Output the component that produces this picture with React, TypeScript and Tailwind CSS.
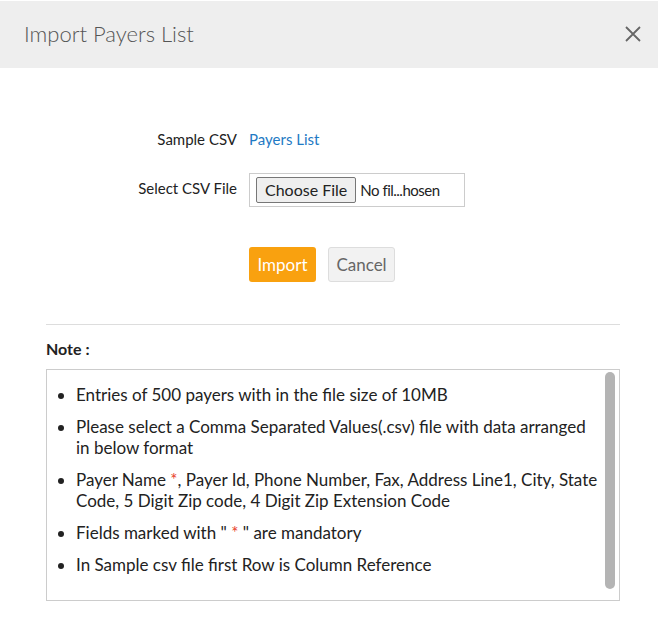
export default function App() {
  const items: React.ReactNode[] = [
    "Entries of 500 payers with in the file size of 10MB",
    "Please select a Comma Separated Values(.csv) file with data arranged in below format",
    <>Payer Name <span className="text-[#e8412c]">*</span>, Payer Id, Phone Number, Fax, Address Line1, City, State Code, 5 Digit Zip code, 4 Digit Zip Extension Code</>,
    <>Fields marked with " <span className="text-[#e8412c]">*</span> " are mandatory</>,
    "In Sample csv file first Row is Column Reference",
  ];
  return (
    <div className="w-[658px] h-[637px] bg-white font-[Lato,sans-serif] text-[#222]">
      <div className="h-[67px] mt-px bg-[#eeeeee] flex items-center justify-between pl-[24px] pr-[16px]">
        <h1 className="text-[22px] font-light text-[#555] -mt-[2px]">Import Payers List</h1>
        <svg width="18" height="18" viewBox="0 0 18 18" stroke="#666" strokeWidth="1.8" className="-mt-[2px]">
          <path d="M2 2L16 16M16 2L2 16" />
        </svg>
      </div>
      <div className="pt-[59px] flex flex-col">
        <div className="flex items-center h-[24px]">
          <div className="w-[237px] text-right text-[15px]">Sample CSV</div>
          <a className="ml-[12px] text-[15px] text-[#1f7ac4]">Payers List</a>
        </div>
        <div className="flex items-center mt-[22px]">
          <div className="w-[237px] text-right text-[15px] -mt-[4px]">Select CSV File</div>
          <div className="ml-[12px] w-[216px] h-[34px] border border-[#ccc] flex items-center px-[6px] gap-[4px] font-['Liberation_Sans',sans-serif]">
            <span className="px-[8px] h-[26px] flex items-center border border-[#777] rounded-[2px] bg-[#efefef] text-[16px]">Choose File</span>
            <span className="text-[15px] tracking-[-0.5px]">No fil...hosen</span>
          </div>
        </div>
        <div className="flex mt-[40px] ml-[249px] gap-[12px]">
          <button className="w-[67px] h-[35px] rounded-[3px] bg-[#f9a10f] text-white text-[17px]">Import</button>
          <button className="w-[67px] h-[35px] rounded-[3px] bg-[#f2f2f2] border border-[#ddd] text-[#666] text-[17px]">Cancel</button>
        </div>
        <div className="mx-[46px] mt-[42px] border-t border-[#ddd] w-[574px]" />
        <div className="ml-[46px] mt-[12px] text-[16px] font-bold">Note :</div>
        <div className="ml-[46px] mt-[8px] w-[574px] h-[232px] border border-[#ccc] flex">
          <ul className="flex-1 pl-[29px] pt-[14px] list-disc text-[17px] leading-[21px] text-[#222]">
            {items.map((t, i) => (
              <li key={i} className="mb-[11px] pr-[4px]">{t}</li>
            ))}
          </ul>
          <div className="w-[12px] mr-[2px] py-[2px]">
            <div className="h-[217px] w-[10px] rounded-full bg-[#b4b4b4]" />
          </div>
        </div>
      </div>
    </div>
  );
}
